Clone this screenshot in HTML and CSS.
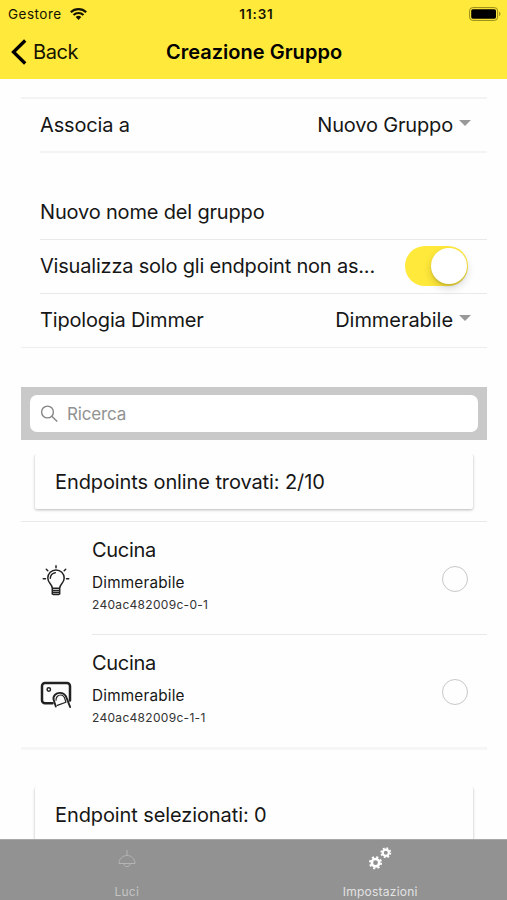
FILE: index.html
```html
<!DOCTYPE html>
<html lang="it">
<head>
<meta charset="utf-8">
<title>Creazione Gruppo</title>
<link rel="stylesheet" href="styles.css">
</head>
<body>
<div class="app">
  <header class="header">
    <div class="status">
      <div class="carrier"><span class="carrier-name">Gestore</span>
        <svg class="wifi" viewBox="0 0 17 12"><g fill="none" stroke="#151300" stroke-width="2.1"><path d="M.8 4.3a10.9 10.9 0 0 1 15.4 0M3.5 7.1a7.1 7.1 0 0 1 10 0"/></g><path d="M5.7 9.1a4 4 0 0 1 5.6 0L8.5 12z" fill="#151300"/></svg>
      </div>
      <span class="clock">11:31</span>
      <svg class="battery" viewBox="0 0 32 14"><rect x=".6" y=".6" width="28" height="12.8" rx="3.2" fill="none" stroke="#958818" stroke-width="1"/><rect x="2.2" y="2.3" width="24.8" height="9.4" rx="1.6"/><path d="M30.2 4.8c1.6.6 1.6 3.8 0 4.4z" fill="#958818"/></svg>
    </div>
    <div class="nav">
      <div class="back"><svg class="chevron" viewBox="0 0 16 26"><path d="M14.2 1.5 2.5 13l11.7 11.5" fill="none" stroke="#000" stroke-width="3.3"/></svg><span>Back</span></div>
      <h1 class="title">Creazione Gruppo</h1>
    </div>
  </header>
  <main class="content">
    <section class="list list-first">
      <div class="row"><span>Associa a</span><span class="select">Nuovo Gruppo<i class="caret"></i></span></div>
    </section>
    <section class="list list-form">
      <div class="row"><span>Nuovo nome del gruppo</span></div>
      <div class="row"><span class="label-long">Visualizza solo gli endpoint non as...</span><span class="toggle"><i class="knob"></i></span></div>
      <div class="row row-last"><span>Tipologia Dimmer</span><span class="select select-type">Dimmerabile<i class="caret"></i></span></div>
    </section>
    <div class="search"><div class="search-field">
      <svg class="lens" viewBox="0 0 18 18"><g fill="none" stroke="#858585" stroke-width="1.4"><circle cx="6.500" cy="7" r="5.900"/><path d="m10.800 11.200 5.400 5.400"/></g></svg>
      <span>Ricerca</span></div></div>
    <div class="card"><span>Endpoints online trovati: 2/10</span></div>
    <section class="endpoints">
      <div class="endpoint">
        <svg class="device" viewBox="0 0 32 32"><g fill="none" stroke="#222" stroke-width="1.5" stroke-linecap="round"><path d="M12.300 23.200c0-4-4.500-5-4.500-10.100a8.200 8.200 0 0 1 16.400 0c0 5.100-4.500 6.100-4.500 10.100zM12.400 25.500h7.200M12.400 27.600h7.200M13.200 29.600h5.600M12.300 23v6M19.700 23v6"/><path d="M10.300 13.300a5.700 5.700 0 0 1 5-5.600M16 .8v1.900M6.300 4.300l1.500 1.500M25.700 4.300l-1.500 1.500M3.200 13.700h2.300M26.500 13.700h2.300"/></g></svg>
        <div class="endpoint-body">
          <div class="info"><strong>Cucina</strong><span class="kind">Dimmerabile</span><small>240ac482009c-0-1</small></div><i class="radio"></i>
        </div>
      </div>
      <div class="endpoint">
        <svg class="device" viewBox="0 0 32 32"><g fill="none" stroke="#222" stroke-width="2.500" stroke-linecap="round" stroke-linejoin="round"><path d="M12.500 25.200H5a3 3 0 0 1-3-3V8a3 3 0 0 1 3-3h22a3 3 0 0 1 3 3v14.500"/><path d="M15.800 28.500 13.700 22c-1.300-4.200 2.700-7.500 6.800-7.100 3.600.4 5.400 2.600 6.200 5.200l3.400 8.900" stroke-width="1.900"/><path d="M16 22.200c-.2-3 2-5.200 4.500-5.200s4 2.200 4.600 4.600l.8 2.600-8.600 3.200" stroke-width="1.200"/><circle cx="8.800" cy="11.500" r="1.700" stroke-width="1.500"/></g></svg>
        <div class="endpoint-body">
          <div class="info"><strong>Cucina</strong><span class="kind">Dimmerabile</span><small class="id-second">240ac482009c-1-1</small></div><i class="radio"></i>
        </div>
      </div>
    </section>
    <div class="card card-selected"><span>Endpoint selezionati: 0</span></div>
  </main>
  <footer class="tabs">
    <div class="tab tab-lights">
      <svg class="tab-icon" viewBox="0 0 24 24"><g fill="none" stroke="#b4b4b4" stroke-width="1"><path d="M12 3v5M4 16.500c0-5 3.700-8 8-8s8 3 8 8zM9 17c.5 3.500 5.500 3.500 6 0"/></g></svg>
      <span>Luci</span>
    </div>
    <div class="tab tab-settings">
      <svg class="tab-icon" viewBox="0 0 24 24"><g fill="none" stroke="#fff"><circle cx="7.500" cy="15.700" r="3.700" stroke-width="2.600"/><circle cx="7.500" cy="15.700" r="5.600" stroke-width="1.900" stroke-dasharray="2.200 2.200"/><circle cx="17.800" cy="5.700" r="3.100" stroke-width="2.200"/><circle cx="17.800" cy="5.700" r="4.700" stroke-width="1.600" stroke-dasharray="1.850 1.850"/></g></svg>
      <span>Impostazioni</span>
    </div>
  </footer>
</div>
</body>
</html>
```
FILE: styles.css
```css
* { box-sizing: border-box; }
body { margin: 0; background: #fefefe; color: #161616; font: 20px/24px Inter, "Liberation Sans", sans-serif; letter-spacing: -.17px; }
i { font-style: normal; }
svg { display: block; flex: none; overflow: visible; }
span { white-space: nowrap; }
.app { display: flex; flex-direction: column; height: 900px; overflow: hidden; }

.header { flex: none; height: 79px; background: #ffe93b; color: #151300; }
.status { display: grid; grid-template-columns: 1fr auto 1fr; align-items: center; height: 27px; padding: 0 6px 0 8px; font-size: 13px; line-height: 16px; letter-spacing: 0; }
.carrier { display: flex; align-items: center; gap: 8px; }
.carrier-name { font-size: 13.500px; letter-spacing: .5px; }
.wifi { width: 17px; height: 12px; }
.clock { padding-left: 4px; font-weight: 600; font-size: 13.500px; letter-spacing: .85px; }
.battery { width: 32px; height: 14px; justify-self: end; }
.nav { display: grid; grid-template-columns: 1fr auto 1fr; align-items: center; height: 50px; padding: 0 10px 0 11px; }
.back { display: flex; align-items: center; gap: 6px; letter-spacing: -.4px; }
.chevron { width: 16px; height: 26px; }
.title { margin: 0; font-size: 20px; line-height: 24px; font-weight: 600; letter-spacing: .02px; color: #000; }

.content { flex: 1; min-height: 0; overflow: hidden; padding: 18px 20px 0 21px; }
.list-first { border-top: 2px solid #f3f3f3; }
.list-form { margin-top: 33px; border-bottom: 1px solid #ededed; }
.row { display: flex; align-items: center; justify-content: space-between; height: 54px; margin-left: 19px; padding-right: 15px; border-bottom: 1px solid #e9e9e9; }
.list-first .row { border-bottom: 2px solid #f3f3f3; }
.list-form .row { padding-bottom: 1px; }
.list-form .row-last { height: 53px; border-bottom: 0; }
.label-long { letter-spacing: -.2px; }
.select { display: flex; align-items: center; gap: 6px; }
.select-type { letter-spacing: -.05px; }
.caret { width: 12px; height: 6px; margin: -4px 1px 0 0; background: #999; clip-path: polygon(0 0, 100% 0, 50% 100%); }
.toggle { width: 63px; height: 40px; margin-right: 4px; padding: 2px 1px; border-radius: 20px; background: #ffe93b; display: flex; justify-content: flex-end; }
.knob { width: 36px; height: 36px; border-radius: 50%; background: #fff; box-shadow: 0 4px 8px rgba(0,0,0,.16), 0 2px 2px rgba(0,0,0,.1); }

.search { height: 53px; margin-top: 39px; padding: 8px 9px; background: #c9c9c9; }
.search-field { display: flex; align-items: center; gap: 8px; height: 37px; padding-left: 11px; border-radius: 7px; background: #fff; color: #929292; font-size: 17px; }
.lens { width: 18px; height: 18px; }
.card { display: flex; align-items: center; height: 55px; margin: 14px 14px 0; padding-left: 20px; border-radius: 2px; box-shadow: 0 1px 3px rgba(0,0,0,.28); background: #fefefe; clip-path: inset(0 -4px -5px -4px); letter-spacing: -.1px; }
.card-selected { height: 55px; margin-top: 37px; }

.endpoints { margin-top: 12px; border-top: 1px solid #e9e9e9; border-bottom: 3px solid #f6f6f6; }
.endpoint { display: flex; align-items: center; height: 112px; padding-left: 19px; }
.endpoint:first-child { height: 113px; }
.device { width: 32px; height: 32px; margin-top: 5px; }
.endpoint-body { flex: 1; align-self: stretch; display: flex; align-items: center; justify-content: space-between; margin-left: 20px; padding-right: 19px; border-bottom: 1px solid #e9e9e9; }
.endpoint:last-child .endpoint-body { border-bottom: 0; }
.info { display: flex; flex-direction: column; padding-bottom: 6px; }
.info strong { font-weight: 400; line-height: 26px; letter-spacing: -.3px; }
.kind { margin-top: 10px; font-size: 15.300px; line-height: 20px; letter-spacing: .2px; }
.info small { font-size: 12px; line-height: 16px; margin-top: 4px; color: #333; letter-spacing: .3px; }
.radio { width: 26px; height: 26px; border: 1.500px solid #c8c8c8; border-radius: 50%; margin-top: 2px; }

.tabs { flex: none; display: flex; height: 61px; background: #929292; border-top: 1px solid #a8a8a8; }
.tab { flex: 1; display: flex; flex-direction: column; align-items: center; padding-top: 7px; font-size: 12px; line-height: 16px; color: #c4c4c4; }
.tab-icon { width: 24px; height: 24px; }
.tab span { margin-top: 13px; letter-spacing: .25px; }
.tab-settings { color: #e2e2e2; }
```
